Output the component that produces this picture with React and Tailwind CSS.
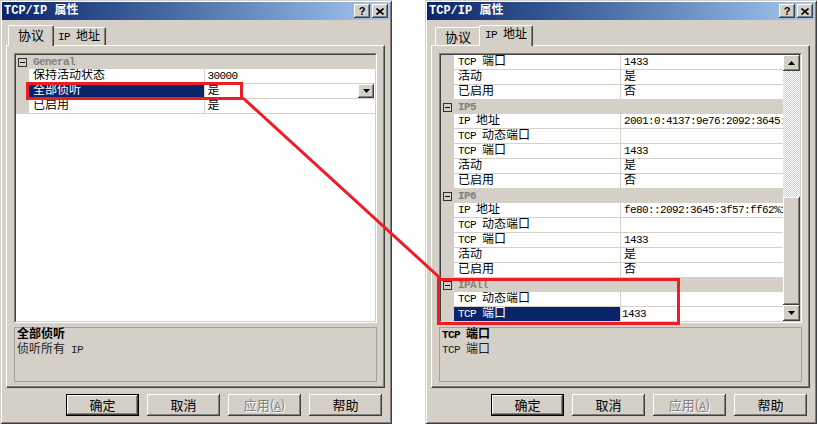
import React from 'react';

const raised =
  'shadow-[inset_-1px_-1px_#404040,inset_1px_1px_#ffffff,inset_-2px_-2px_#808080,inset_2px_2px_#d4d0c8]';
const frame =
  'shadow-[inset_1px_1px_#d4d0c8,inset_-1px_-1px_#404040,inset_2px_2px_#ffffff,inset_-2px_-2px_#808080]';

const protocolRows = [
  { group: 'General' },
  { name: '保持活动状态', value: '30000' },
  { name: '全部侦听', value: '是', selected: true, dropdown: true },
  { name: '已启用', value: '是' },
];

const ipRows = [
  { name: 'TCP 端口', value: '1433' },
  { name: '活动', value: '是' },
  { name: '已启用', value: '否' },
  { group: 'IP5' },
  { name: 'IP 地址', value: '2001:0:4137:9e76:2092:3645:3f57:ff62' },
  { name: 'TCP 动态端口', value: '' },
  { name: 'TCP 端口', value: '1433' },
  { name: '活动', value: '是' },
  { name: '已启用', value: '否' },
  { group: 'IP6' },
  { name: 'IP 地址', value: 'fe80::2092:3645:3f57:ff62%11' },
  { name: 'TCP 动态端口', value: '' },
  { name: 'TCP 端口', value: '1433' },
  { name: '活动', value: '是' },
  { name: '已启用', value: '否' },
  { group: 'IPAll' },
  { name: 'TCP 动态端口', value: '' },
  { name: 'TCP 端口', value: '1433', selected: true },
];

// latin runs get the narrow SimSun-like width, CJK stays 12px
const Txt = ({ children }) => {
  const parts = String(children).split(/([\x20-\x7e]+)/).filter(Boolean);
  return (
    <span className="whitespace-pre">
      {parts.map((p, i) =>
        /^[\x20-\x7e]+$/.test(p) ? (
          <span key={i} className="text-[11px] tracking-[-0.6px]">{p}</span>
        ) : (
          <span key={i}>{p}</span>
        )
      )}
    </span>
  );
};

const Arrow = ({ up }) => (
  <svg width="7" height="4" viewBox="0 0 7 4">
    <path d={up ? 'M3.5 0 L7 4 L0 4 Z' : 'M0 0 L7 0 L3.5 4 Z'} fill="#000" />
  </svg>
);

const MinusBox = () => (
  <div className="w-[9px] h-[9px] border border-[#303030] flex items-center justify-center">
    <div className="w-[5px] h-[1px] bg-black" />
  </div>
);

const Row = ({ row }) => {
  if (row.group) {
    return (
      <div className="h-[14px] bg-[#d4d0c8] flex items-center">
        <div className="w-[13px] shrink-0 flex justify-center">
          <MinusBox />
        </div>
        <span className="pl-[4px] font-bold text-[#808080]">
          <Txt>{row.group}</Txt>
        </span>
      </div>
    );
  }
  return (
    <div className="h-[15px] flex">
      <div className="w-[13px] shrink-0 bg-[#d4d0c8]" />
      <div
        className={`flex-1 min-w-0 overflow-hidden whitespace-nowrap border-b border-r border-[#d4d0c8] pl-[4px] leading-[14px] ${
          row.selected ? 'bg-[#0a246a] text-white' : ''
        }`}
      >
        <Txt>{row.name}</Txt>
      </div>
      <div className="flex-1 min-w-0 overflow-hidden whitespace-nowrap border-b border-[#d4d0c8] flex">
        <span className={`leading-[14px] ${row.selected && !row.dropdown ? 'pl-[1px]' : 'pl-[3px]'}`}>
          <Txt>{row.value}</Txt>
        </span>
        {row.dropdown && (
          <div className={`ml-auto mr-[1px] w-[16px] h-[14px] bg-[#d4d0c8] flex items-center justify-center ${raised}`}>
            <Arrow />
          </div>
        )}
      </div>
    </div>
  );
};

const Scrollbar = () => (
  <div className="w-[17px] shrink-0 flex flex-col">
    <div className={`h-[16px] bg-[#d4d0c8] flex items-center justify-center ${raised}`}>
      <Arrow up />
    </div>
    <div className="h-[126px] bg-[image:repeating-conic-gradient(#d4d0c8_0_25%,#ffffff_0_50%)] bg-[length:2px_2px]" />
    <div className={`flex-1 bg-[#d4d0c8] ${raised}`} />
    <div className={`h-[16px] bg-[#d4d0c8] flex items-center justify-center ${raised}`}>
      <Arrow />
    </div>
  </div>
);

const Button = ({ children, primary, disabled }) => (
  <div
    className={`w-[73px] h-[22px] bg-[#d4d0c8] flex items-center justify-center text-[13px] font-['Noto_Sans_CJK_SC',sans-serif] ${raised} ${
      primary ? 'border border-black' : ''
    } ${disabled ? 'text-[#808080] [text-shadow:1px_1px_0_#ffffff]' : 'text-black'}`}
  >
    {children}
  </div>
);

const Tab = ({ label, active, width, big }) => (
  <div
    className={`${width} flex items-center justify-center bg-[#d4d0c8] border-t border-l border-r border-t-white border-l-white border-r-[#404040] rounded-t-[2px] shadow-[inset_-1px_0_#808080] ${
      active ? 'h-[21px] -mb-[1px] -mx-[2px] relative z-10 pb-[2px]' : 'h-[18px]'
    } ${big ? "text-[13px] font-['Noto_Sans_CJK_SC',sans-serif]" : ''}`}
  >
    {big ? label : <Txt>{label}</Txt>}
  </div>
);

const PropertiesWindow = ({ activeTab, rows, scroll, descTitle, descText }) => (
  <div className={`w-[392px] h-[424px] shrink-0 bg-[#d4d0c8] p-[2px] flex flex-col ${frame}`}>
    {/* title bar */}
    <div className="h-[18px] flex items-center pl-[2px] pr-[2px] bg-linear-to-r from-[#0a246a] to-[#a6caf0]">
      <span className="text-white font-bold text-[12px] whitespace-pre">TCP/IP 属性</span>
      <div className="ml-auto flex gap-[2px]">
        <div className={`w-[16px] h-[14px] bg-[#d4d0c8] flex items-center justify-center text-[11px] font-bold font-['Liberation_Sans',sans-serif] ${raised}`}>
          ?
        </div>
        <div className={`w-[16px] h-[14px] bg-[#d4d0c8] flex items-center justify-center ${raised}`}>
          <svg width="8" height="7" viewBox="0 0 8 7">
            <path d="M0.5 0.5 L7.5 6.5 M7.5 0.5 L0.5 6.5" stroke="#000" strokeWidth="1.6" />
          </svg>
        </div>
      </div>
    </div>

    {/* tabs */}
    <div className="mt-[5px] h-[20px] flex items-end pl-[8px]">
      <Tab label="协议" active={activeTab === 0} width="w-[46px]" big />
      <Tab label="IP 地址" active={activeTab === 1} width="w-[54px]" />
    </div>

    {/* tab page */}
    <div className="ml-[4px] w-[379px] h-[343px] border border-t-white border-l-white border-r-[#404040] border-b-[#404040] shadow-[inset_-1px_-1px_#808080] px-[7px] pt-[7px]">
      <div className="h-[270px] border border-t-[#808080] border-l-[#808080] border-r-white border-b-white">
        <div className="h-full border border-t-[#404040] border-l-[#404040] border-r-[#d4d0c8] border-b-[#d4d0c8] bg-white flex overflow-hidden">
          <div className="flex-1 min-w-0 overflow-hidden">
            {rows.map((row, i) => (
              <Row key={i} row={row} />
            ))}
          </div>
          {scroll && <Scrollbar />}
        </div>
      </div>
      <div className="mt-[4px] h-[55px] border border-[#a0a0a0] px-[2px] leading-[15px]">
        <div className="font-bold">
          <Txt>{descTitle}</Txt>
        </div>
        <div className="text-[#202020]">
          <Txt>{descText}</Txt>
        </div>
      </div>
    </div>

    {/* buttons */}
    <div className="mt-[6px] flex justify-end gap-[8px] pr-[8px]">
      <Button primary>确定</Button>
      <Button>取消</Button>
      <Button disabled>
        应用(<span className="text-[11px] underline">A</span>)
      </Button>
      <Button>帮助</Button>
    </div>
  </div>
);

const App = () => {
  return (
    <div className="relative w-[818px] h-[425px] bg-white overflow-hidden flex gap-[33px] text-[12px] text-black font-['Liberation_Mono','Noto_Sans_CJK_SC',monospace]">
      <PropertiesWindow
        activeTab={0}
        rows={protocolRows}
        descTitle="全部侦听"
        descText="侦听所有 IP"
      />
      <PropertiesWindow
        activeTab={1}
        rows={ipRows}
        scroll
        descTitle="TCP 端口"
        descText="TCP 端口"
      />

      {/* red annotation */}
      <svg className="absolute inset-0 pointer-events-none" width="818" height="425">
        <g fill="none" stroke="#ee1c25" strokeWidth="3">
          <rect x="27.5" y="83.5" width="214" height="15" />
          <rect x="438.5" y="279.5" width="240" height="44" />
          <line x1="243" y1="98" x2="440" y2="278" />
        </g>
      </svg>
    </div>
  );
};

export default App;
